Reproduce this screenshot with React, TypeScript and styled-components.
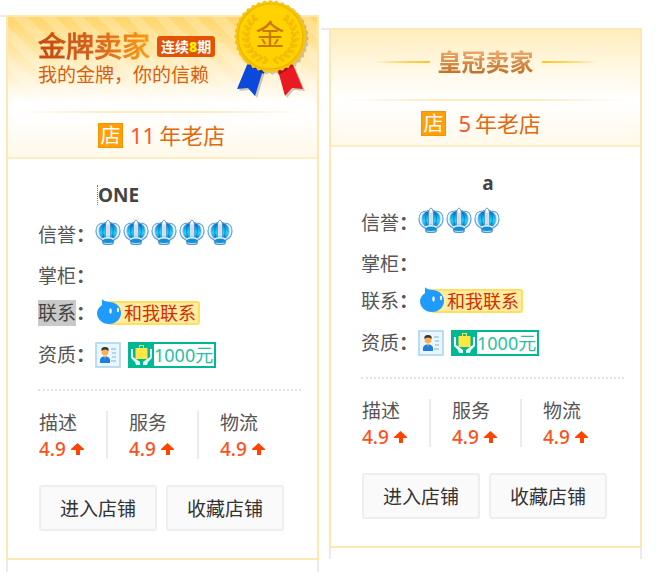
import React from 'react';
import styled, { createGlobalStyle, css } from 'styled-components';

const GlobalStyle = createGlobalStyle`
  *, *::before, *::after { box-sizing: border-box; }
  body {
    margin: 0;
    background: #fff;
    color: #555;
    font-family: "Noto Sans", "Noto Sans CJK SC", sans-serif;
    font-size: 19px;
    line-height: 24px;
  }
  h2, h3, p, dl, dd { margin: 0; }
  svg { display: block; flex: none; }
`;

const Page = styled.main`
  display: grid;
  grid-template-columns: 1fr 1fr;
  align-items: start;
  gap: 10px;
  padding: 0 14px 0 6px;
`;

const Column = styled.div<{ $top: number }>`
  padding-top: ${(p) => p.$top}px;
`;

const Card = styled.section`
  position: relative;
  border: 2px solid #ffe7b3;

  &::before {
    content: "";
    position: absolute;
    top: -2px;
    right: 100%;
    width: 8px;
    height: 2px;
    margin-right: 2px;
    background: #ebebeb;
  }
`;

const Tail = styled.div<{ $height: number }>`
  height: ${(p) => p.$height}px;
  border: solid #ebebeb;
  border-width: 0 2px;
`;

const Banner = styled.header<{ $gold?: boolean }>`
  ${(p) =>
    p.$gold
      ? css`
          height: 94px;
          padding: 14px 0 0 30px;
          background:
            linear-gradient(to bottom, rgba(255, 255, 255, 0) 0%, rgba(255, 255, 255, 0.5) 45%, #fff 92%),
            repeating-linear-gradient(45deg, #ffd66a 0 10px, #ffde86 10px 20px);
        `
      : css`
          height: 69px;
          padding-top: 16px;
          background: linear-gradient(to bottom, #ffedbc, #fff8e4 55%, #fff);
        `}
`;

const TitleRow = styled.div<{ $center?: boolean }>`
  display: flex;
  align-items: center;
  justify-content: ${(p) => (p.$center ? 'center' : 'flex-start')};
  gap: ${(p) => (p.$center ? 8 : 7)}px;
  height: ${(p) => (p.$center ? 32 : 30)}px;
`;

const GoldTitle = styled.h2`
  font-size: 28px;
  line-height: 30px;
  font-weight: 400;
  -webkit-text-stroke: 1px transparent;
  color: transparent;
  background: linear-gradient(to right, #c8480c, #d4601c 50%, #ff9c10);
  background-clip: text;
`;

const CrownTitle = styled.h2`
  font-size: 24px;
  line-height: 32px;
  font-weight: 700;
  color: transparent;
  background: linear-gradient(to bottom, #eba766 20%, #c0712c 85%);
  background-clip: text;
`;

const Term = styled.span`
  padding: 0 4px;
  border-radius: 3px;
  background: #e35205;
  color: #fff;
  font-size: 14px;
  line-height: 21px;
  font-weight: 700;

  b { color: #ffee00; }
`;

const Slogan = styled.p`
  margin-top: 2px;
  color: #d8600c;
`;

const Flourish = styled.span<{ $side: 'left' | 'right' }>`
  width: 56px;
  height: 2px;
  background: linear-gradient(to ${(p) => p.$side}, #ffc420, #ffd766 50%, rgba(255, 215, 102, 0));
`;

const FadeRule = styled.div`
  height: 2px;
  background: linear-gradient(to right, #fff 3%, #ffebbd 35%, #ffebbd 65%, #fff 97%);
`;

const Years = styled.p`
  display: flex;
  align-items: center;
  height: 46px;
  padding-left: 90px;
  border-bottom: 2px solid #ffedc4;
  background: linear-gradient(to bottom, #fff, #fff9e9);
  color: #df6a10;
  font-size: 22px;
`;

const ShopMark = styled.span`
  width: 25px;
  margin-right: 7px;
  border: 1px solid #f59300;
  background: #ff9f0a;
  color: #fff;
  font-size: 20px;
  line-height: 23px;
  text-align: center;
`;

const YearCount = styled.span`
  min-width: 18px;
  margin-right: 4px;
  color: #ff5527;
  text-align: right;
`;

const Body = styled.div`
  padding: 18px 16px 27px 30px;
`;

const ShopName = styled.h3<{ $center?: boolean }>`
  height: 36px;
  padding-left: 59px;
  color: #444;
  font-size: 19px;
  line-height: 36px;
  font-weight: 700;
  ${(p) => p.$center && css`
    padding: 0 9px 0 0;
    text-align: center;
  `}
`;

const Caret = styled.span`
  display: inline-block;
  height: 20px;
  border-left: 1px dotted #777;
  line-height: 20px;
`;

const Row = styled.div<{ $height: number }>`
  display: flex;
  align-items: center;
  height: ${(p) => p.$height}px;
`;

const Label = styled.dt`
  width: 57px;
  flex: none;
  white-space: nowrap;

  mark { background: #c9c9c9; color: #444; }
`;

const Value = styled.dd<{ $raised?: boolean }>`
  display: flex;
  align-items: center;
  gap: ${(p) => (p.$raised ? 2 : 7)}px;
  padding-bottom: ${(p) => (p.$raised ? 6 : 0)}px;
`;

const Contact = styled.a`
  display: flex;
  align-items: center;
  height: 28px;
  padding-left: 1px;
  color: #d12f00;
  font-size: 18px;
  text-decoration: none;

  svg { z-index: 1; margin-bottom: 3px; }

  span {
    margin-left: -14px;
    padding: 0 2px 0 14px;
    border: 2px solid #ffdf5e;
    border-radius: 3px;
    background: #ffeba2;
    line-height: 20px;
  }
`;

const Deposit = styled.span`
  display: flex;
  height: 26px;
  padding-right: 2px;
  border: 1px solid #00b894;
  outline: 1px solid #00b894;
  outline-offset: -2px;
  color: #2bbfa2;
  font-size: 18px;
  line-height: 24px;
`;

const Scores = styled.dl`
  display: flex;
  margin-top: 10px;
  padding-top: 20px;
  border-top: 2px dotted #e2e2e2;
`;

const Score = styled.div`
  width: 91px;
  padding-left: 21px;
  border-left: 2px solid #ebebeb;

  &:first-child {
    width: 68px;
    padding-left: 1px;
    border-left: 0;
  }

  dt { line-height: 24px; }

  dd {
    display: flex;
    align-items: center;
    gap: 5px;
    height: 24px;
    padding-top: 4px;
    color: #ff5019;
    font-weight: 500;
  }
`;

const Actions = styled.div`
  display: flex;
  gap: 9px;
  margin-top: 26px;
  padding-left: 1px;
`;

const ActionButton = styled.button`
  height: 46px;
  width: 118px;
  padding: 2px 0 0;
  border: 2px solid #eee;
  border-radius: 3px;
  background: #fafafa;
  color: #333;
  font: inherit;
  cursor: pointer;
`;

const MedalSlot = styled.div`
  position: absolute;
  top: -17px;
  right: 5px;
`;

const teeth = Array.from({ length: 72 }, (_, i) => {
  const angle = (i / 72) * Math.PI * 2;
  const radius = i % 2 ? 34.5 : 36.5;
  return `${36.5 + radius * Math.cos(angle)},${36.5 + radius * Math.sin(angle)}`;
}).join(' ');

const laurel = [-48, -34, -20, -6, 8, 22, 36, 50, 64, 78];

const Medal = () => (
  <svg width="78" height="100" viewBox="0 0 78 100" aria-label="金牌" role="img">
    <g fill="#77705a" opacity="0.35" transform="translate(2 2)">
      <polygon points={teeth} />
      <path d="M15 60 3 89l11-1 7 8 9-29zM43 67l8 29 7-8 11 1-12-29z" />
    </g>
    <path d="M15 60 3 89l11-1 7 8 9-29z" fill="#0b49dc" />
    <path d="M13 64l17 10 2-8-17-6z" fill="#0734a4" />
    <path d="M43 67l8 29 7-8 11 1-12-29z" fill="#ea1a22" />
    <path d="M43 67l2 8 14-9-3-6z" fill="#b30d16" />
    <polygon points={teeth} fill="#f8c40a" />
    <circle cx="36.5" cy="36.5" r="32.5" fill="#ffd200" stroke="#efb300" strokeWidth="1.2" />
    {laurel.map((a) => (
      <g key={a} fill="#f9c408" stroke="#e8aa04" strokeWidth="0.5">
        <ellipse cx="62" cy="36.5" rx="3.2" ry="1.2" transform={`rotate(${a} 36.5 36.5) rotate(-35 62 36.5)`} />
        <ellipse cx="59" cy="36.5" rx="2.6" ry="1" transform={`rotate(${a} 36.5 36.5) rotate(-115 59 36.5)`} />
        <ellipse cx="11" cy="36.5" rx="3.2" ry="1.2" transform={`rotate(${-a} 36.5 36.5) rotate(35 11 36.5)`} />
        <ellipse cx="14" cy="36.5" rx="2.6" ry="1" transform={`rotate(${-a} 36.5 36.5) rotate(115 14 36.5)`} />
      </g>
    ))}
    <text x="36" y="46" textAnchor="middle" fontSize="29" fill="#c97908" fontFamily="Noto Sans CJK SC, sans-serif">
      金
    </text>
  </svg>
);

const Crown = () => (
  <svg width="26" height="26" viewBox="0 0 26 26" aria-hidden="true">
    <defs>
      <linearGradient id="crownFill" x1="0" y1="0" x2="0" y2="1">
        <stop offset="0" stopColor="#0a5fb8" />
        <stop offset="0.35" stopColor="#0fa4e4" />
        <stop offset="0.65" stopColor="#22d6f8" />
        <stop offset="1" stopColor="#0a7ccc" />
      </linearGradient>
    </defs>
    <path d="M7 21C3 19 1 16 1 12c0-5 3-8 8-8l4-1 4 1c5 0 8 3 8 8 0 4-2 7-6 9z" fill="#f3f8ff" stroke="#5b9fe6" strokeWidth="1.2" />
    <path d="M8 20C4.500 17 4 14 4 12c0-4 2-7 6-8l3-1 3 1c4 1 6 4 6 8 0 2-.5 5-4 8z" fill="url(#crownFill)" stroke="#6fa9e4" strokeWidth="0.8" />
    <path d="M9.500 19.500C7 14 7 8 10 5M16.500 19.500c2.500-5.500 2.500-11.500-.5-14.500" fill="none" stroke="#0868b8" strokeWidth="0.7" />
    <path d="M10.800 4q2.200-6 4.400 0v16h-4.400z" fill="#fff" stroke="#4a86cc" strokeWidth="0.8" />
    <path d="M12.300 5.500h1.400v13h-1.400z" fill="#c6cad8" />
    <path d="M7 19.500q6-3 12 0L18 25q-5 1.500-10 0z" fill="#1292d6" stroke="#4a86cc" strokeWidth="0.8" />
    <path d="M7 20.200q6-3 12 0" fill="none" stroke="#eef6ff" strokeWidth="1.600" />
    <path d="M8.500 24q4.500 1.200 9 0" fill="none" stroke="#cfe9fa" strokeWidth="0.9" />
  </svg>
);

const Drop = () => (
  <svg width="26" height="26" viewBox="0 0 26 26" aria-hidden="true">
    <path d="M6 0c2 3 5 2 8 3 7 1 11 5 11 11S20 25 13 25 1 20 1 14c0-3 2-6 5-8z" fill="#1f9cfb" />
    <ellipse cx="14.5" cy="12" rx="1.2" ry="2.8" fill="#fff" />
    <ellipse cx="22" cy="11" rx="1.1" ry="2.3" fill="#fff" />
  </svg>
);

const IdCard = () => (
  <svg width="26" height="26" viewBox="0 0 26 26" aria-hidden="true">
    <rect x="1" y="1" width="24" height="24" fill="#eaf6fd" stroke="#a8d3ec" strokeWidth="1.5" />
    <path d="M5 21v-3q0-3 5-4 5 1 5 4v3z" fill="#1d7fe0" />
    <circle cx="10" cy="10" r="3.4" fill="#ffad4e" />
    <path d="M6.500 9q-1-4 3.500-4t3.500 4q-1-1.500-3.500-1.500T6.500 9z" fill="#353535" />
    <path d="m9 14 1 3 1-3z" fill="#ffad4e" />
    <path d="M16 7h5M17 11h4M17 15h4M16 19h5" stroke="#9ccbe9" strokeWidth="1.5" />
  </svg>
);

const Hands = () => (
  <svg width="25" height="24" viewBox="0 0 25 24" aria-hidden="true">
    <path d="M0 0h25v24H0z" fill="#00b894" />
    <path d="M2 6h2v8l3 2 4 3v3H7l-1-3-4-4zM23 6h-2v8l-3 2-4 3v3h4l1-3 4-4z" fill="#e9fff8" />
    <path d="M6.500 5H10V2h5v3h3.500v11h-12z" fill="#ffe640" />
    <path d="M11 5V3h3v2z" fill="#00b894" />
  </svg>
);

const UpArrow = () => (
  <svg width="13" height="12" viewBox="0 0 13 12" aria-label="上升" role="img">
    <path d="M6.500 0 13 6v1H9v5H5V7H0V6z" fill="#ff4400" />
  </svg>
);

type DetailsProps = { name: string; crowns: number; selected?: boolean; centered?: boolean };

const Details = ({ name, crowns, selected, centered }: DetailsProps) => (
  <Body>
    <ShopName $center={centered}>{centered ? name : <Caret>{name}</Caret>}</ShopName>
    <dl>
      <Row $height={44}>
        <Label>信誉<b>：</b></Label>
        <Value $raised>
          {Array.from({ length: crowns }, (_, i) => <Crown key={i} />)}
        </Value>
      </Row>
      <Row $height={38}>
        <Label>掌柜<b>：</b></Label>
      </Row>
      <Row $height={36}>
        <Label>{selected ? <mark>联系</mark> : '联系'}<b>：</b></Label>
        <Value>
          <Contact href="#contact"><Drop /><span>和我联系</span></Contact>
        </Value>
      </Row>
      <Row $height={48}>
        <Label>资质<b>：</b></Label>
        <Value>
          <IdCard />
          <Deposit><Hands />1000元</Deposit>
        </Value>
      </Row>
    </dl>
    <Scores>
      {['描述', '服务', '物流'].map((item) => (
        <Score key={item}>
          <dt>{item}</dt>
          <dd>4.9<UpArrow /></dd>
        </Score>
      ))}
    </Scores>
    <Actions>
      <ActionButton type="button">进入店铺</ActionButton>
      <ActionButton type="button">收藏店铺</ActionButton>
    </Actions>
  </Body>
);

const ShopYears = ({ count }: { count: number }) => (
  <Years>
    <ShopMark>店</ShopMark>
    <YearCount>{count}</YearCount>
    年老店
  </Years>
);

export default function App() {
  return (
    <>
      <GlobalStyle />
      <Page>
        <Column $top={15}>
          <Card>
            <Banner $gold>
              <TitleRow>
                <GoldTitle>金牌卖家</GoldTitle>
                <Term>连续<b>8</b>期</Term>
              </TitleRow>
              <Slogan>我的金牌，你的信赖</Slogan>
            </Banner>
            <FadeRule />
            <ShopYears count={11} />
            <Details name="ONE" crowns={5} selected />
            <MedalSlot><Medal /></MedalSlot>
          </Card>
          <Tail $height={13} />
        </Column>
        <Column $top={28}>
          <Card>
            <Banner>
              <TitleRow $center>
                <Flourish $side="left" />
                <CrownTitle>皇冠卖家</CrownTitle>
                <Flourish $side="right" />
              </TitleRow>
            </Banner>
            <FadeRule />
            <ShopYears count={5} />
            <Details name="a" crowns={3} centered />
          </Card>
          <Tail $height={11} />
        </Column>
      </Page>
    </>
  );
}
